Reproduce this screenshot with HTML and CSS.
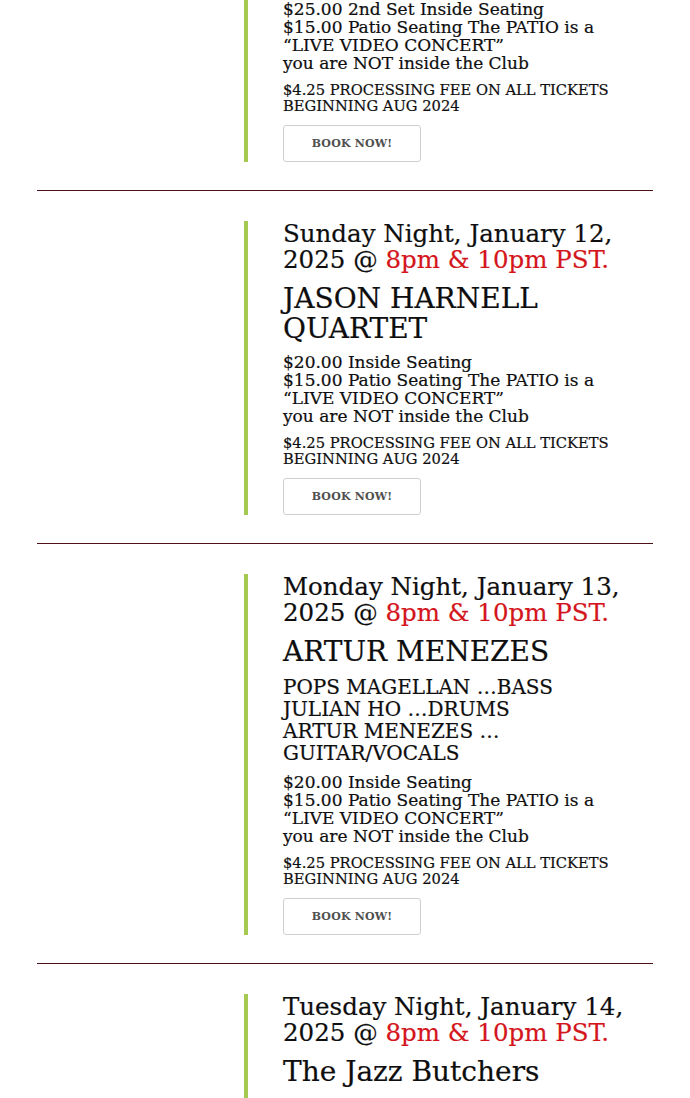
FILE: index.html
```html
<!DOCTYPE html>
<html lang="en">
<head>
<meta charset="utf-8">
<title>Events</title>
<link rel="stylesheet" href="styles.css">
</head>
<body>
<main class="events">
  <section class="event event-first">
    <div class="event-media"></div>
    <div class="event-body">
      <p class="prices">$25.00 2nd Set Inside Seating<br>$15.00 Patio Seating The PATIO is a “LIVE VIDEO CONCERT”<br>you are NOT inside the Club</p>
      <p class="fee">$4.25 PROCESSING FEE ON ALL TICKETS BEGINNING AUG 2024</p>
      <a class="book" href="#">BOOK NOW!</a>
    </div>
  </section>
  <hr class="rule">
  <section class="event">
    <div class="event-media"></div>
    <div class="event-body">
      <h2 class="date">Sunday Night, January 12, 2025 @ <span class="time">8pm &amp; 10pm PST.</span></h2>
      <h3 class="title">JASON HARNELL QUARTET</h3>
      <p class="prices">$20.00 Inside Seating<br>$15.00 Patio Seating The PATIO is a “LIVE VIDEO CONCERT”<br>you are NOT inside the Club</p>
      <p class="fee">$4.25 PROCESSING FEE ON ALL TICKETS BEGINNING AUG 2024</p>
      <a class="book" href="#">BOOK NOW!</a>
    </div>
  </section>
  <hr class="rule">
  <section class="event">
    <div class="event-media"></div>
    <div class="event-body">
      <h2 class="date">Monday Night, January 13, 2025 @ <span class="time">8pm &amp; 10pm PST.</span></h2>
      <h3 class="title">ARTUR MENEZES</h3>
      <p class="lineup">POPS MAGELLAN …BASS<br>JULIAN HO …DRUMS<br>ARTUR MENEZES … GUITAR/VOCALS</p>
      <p class="prices">$20.00 Inside Seating<br>$15.00 Patio Seating The PATIO is a “LIVE VIDEO CONCERT”<br>you are NOT inside the Club</p>
      <p class="fee">$4.25 PROCESSING FEE ON ALL TICKETS BEGINNING AUG 2024</p>
      <a class="book" href="#">BOOK NOW!</a>
    </div>
  </section>
  <hr class="rule">
  <section class="event">
    <div class="event-media"></div>
    <div class="event-body">
      <h2 class="date">Tuesday Night, January 14, 2025 @ <span class="time">8pm &amp; 10pm PST.</span></h2>
      <h3 class="title">The Jazz Butchers</h3>
      <p class="lineup">the late night jazz trio</p>
      <p class="prices">$20.00 Inside Seating<br>$15.00 Patio Seating The PATIO is a “LIVE VIDEO CONCERT”<br>you are NOT inside the Club</p>
      <p class="fee">$4.25 PROCESSING FEE ON ALL TICKETS BEGINNING AUG 2024</p>
      <a class="book" href="#">BOOK NOW!</a>
    </div>
  </section>
</main>
</body>
</html>
```

FILE: styles.css
```css
html, body {
  margin: 0;
  padding: 0;
  background: #ffffff;
}

body {
  font-family: "DejaVu Serif", "Liberation Serif", serif;
  color: #0e0e0e;
  overflow: hidden;
}

.events {
  width: 616px;
  margin: 0 auto;
  padding: 0 37px;
  box-sizing: content-box;
}

.event {
  display: grid;
  grid-template-columns: 207px 1fr;
  padding: 30px 0 28px;
}

.event-first {
  padding-top: 0;
}

.event-body {
  border-left: 4px solid #a6c951;
  padding-left: 35px;
  padding-right: 12px;
  display: flex;
  flex-direction: column;
  align-items: flex-start;
  -webkit-text-stroke: 0.2px currentColor;
}

.rule {
  margin: 0;
  border: 0;
  height: 1px;
  background: #4a1217;
}

.date {
  margin: 0 0 11px;
  font-size: 24.5px;
  line-height: 26px;
  font-weight: normal;
}

.time {
  color: #d4151c;
}

.title {
  margin: 0 0 9px;
  font-size: 28px;
  line-height: 30px;
  font-weight: normal;
}

.lineup {
  margin: 0 0 9px;
  font-size: 20px;
  line-height: 22px;
}

.prices {
  margin: 0 0 10px;
  font-size: 17px;
  line-height: 18px;
}

.fee {
  margin: 0 0 11px;
  font-size: 14.7px;
  line-height: 16px;
}

.book {
  display: flex;
  align-items: center;
  justify-content: center;
  width: 136px;
  height: 35px;
  border: 1px solid #cfcfcf;
  border-radius: 3px;
  color: #505050;
  text-decoration: none;
  font-size: 11px;
  font-weight: bold;
  letter-spacing: 0.2px;
  -webkit-text-stroke: 0;
}
```
